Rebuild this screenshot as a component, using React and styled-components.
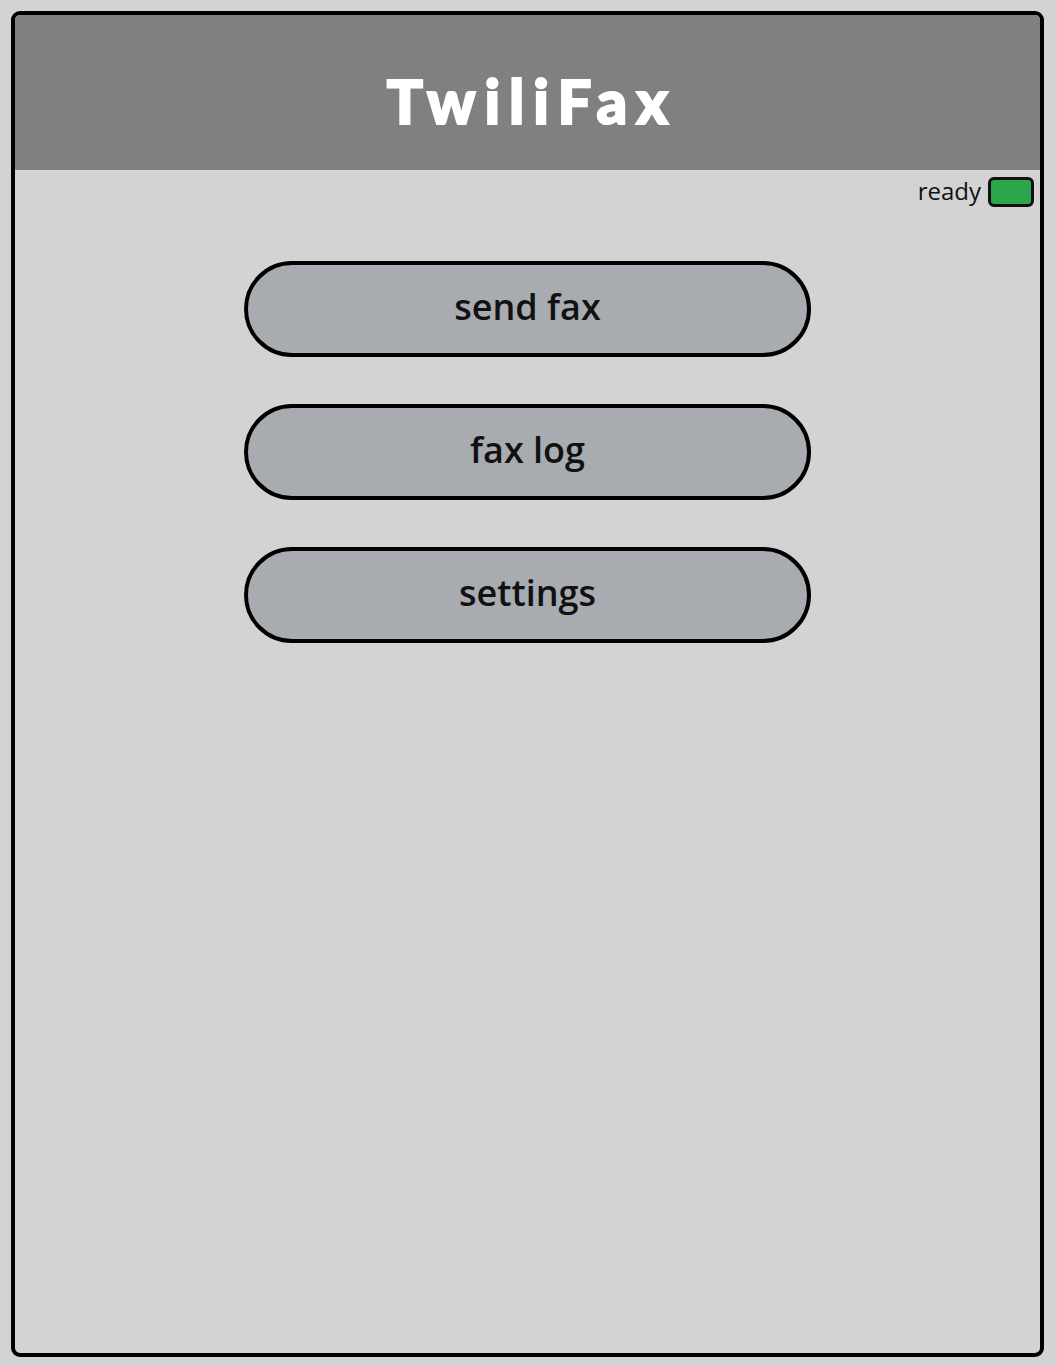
import React from "react";
import styled, { createGlobalStyle } from "styled-components";

const Global = createGlobalStyle`
  * { box-sizing: border-box; }
  html, body { margin: 0; padding: 0; background: #d3d3d3; }
  body { font-family: "Open Sans", "Noto Sans", sans-serif; }
`;

const Page = styled.div`
  padding: 11px 12px 9px 11px;
`;

const Frame = styled.div`
  height: 1346px;
  border: 4px solid #000;
  border-radius: 9px;
  overflow: hidden;
  background: #d3d3d3;
  display: flex;
  flex-direction: column;
`;

const Header = styled.header`
  height: 155px;
  background: #808080;
  display: flex;
  align-items: center;
  justify-content: center;
  padding-top: 16px;
`;

const Title = styled.h1`
  margin: 0 -9px 0 0;
  font-family: "Lato", "Open Sans", sans-serif;
  font-weight: 900;
  font-size: 60px;
  letter-spacing: 9px;
  color: #fff;
  line-height: 1;
  -webkit-text-stroke: 2px #fff;
`;

const StatusRow = styled.div`
  display: flex;
  justify-content: flex-end;
  align-items: center;
  gap: 7px;
  padding: 7px 6px 0 0;
`;

const StatusText = styled.span`
  font-size: 24px;
  color: #111;
  line-height: 1;
  margin-top: -3px;
`;

const Light = styled.span`
  width: 46px;
  height: 30px;
  border: 3px solid #111;
  border-radius: 6px;
  background: ${(p) => p.$color};
`;

const Menu = styled.nav`
  display: flex;
  flex-direction: column;
  align-items: center;
  gap: 47px;
  margin-top: 54px;
`;

const MenuButton = styled.button`
  width: 567px;
  height: 96px;
  border: 4px solid #000;
  border-radius: 48px;
  background: #a8abaf;
  font-family: "Open Sans", "Noto Sans", sans-serif;
  font-weight: 600;
  font-size: 36px;
  color: #111;
  cursor: pointer;
  padding: 0 0 6px;
`;

export default function App() {
  return (
    <>
      <Global />
      <Page>
        <Frame>
          <Header>
            <Title>TwiliFax</Title>
          </Header>
          <StatusRow>
            <StatusText>ready</StatusText>
            <Light $color="#2ba64b" />
          </StatusRow>
          <Menu>
            <MenuButton>send fax</MenuButton>
            <MenuButton>fax log</MenuButton>
            <MenuButton>settings</MenuButton>
          </Menu>
        </Frame>
      </Page>
    </>
  );
}
